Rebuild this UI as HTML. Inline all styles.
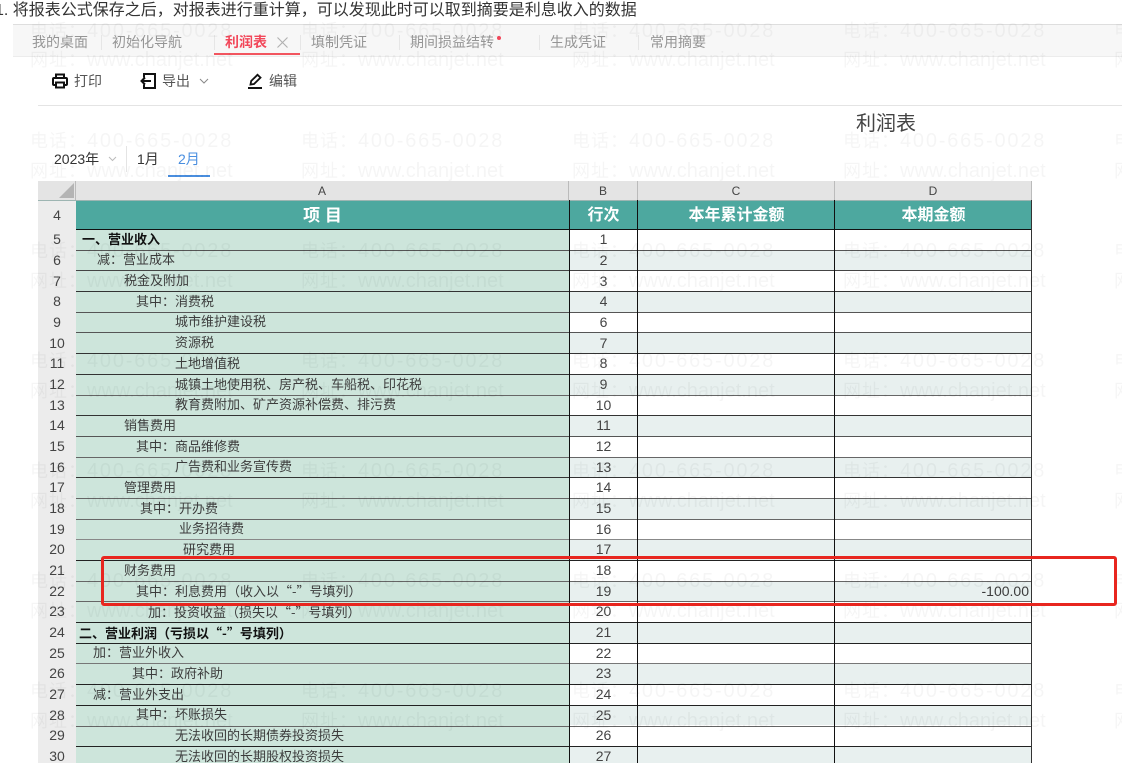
<!DOCTYPE html>
<html lang="zh">
<head>
<meta charset="utf-8">
<style>
html,body{margin:0;padding:0;background:#fff;height:763px;overflow:hidden}
body{width:1122px;height:763px;overflow:hidden;position:relative;font-family:"Liberation Sans","Noto Sans CJK SC",sans-serif;color:#333}
.a{position:absolute;white-space:nowrap}
#c{position:absolute;left:0;top:0;width:1122px;height:763px;overflow:hidden}
#s{position:absolute;left:0;top:0;width:1122px;height:770px;filter:blur(.35px)}
.tab{position:absolute;top:33px;font-size:14px;line-height:18px;color:#959595;white-space:nowrap}
.sep{position:absolute;top:35px;width:1px;height:15px;background:#e6e6e6}
.tb{position:absolute;top:72px;font-size:14px;line-height:18px;color:#555;white-space:nowrap}
.rh{position:absolute;left:38px;width:38px;height:20.67px;line-height:21px;font-size:14px;text-align:center;color:#444;background:#ececec}
.ra{position:absolute;left:76px;width:493px;height:20.67px;background:#cde5db}
.rb{position:absolute;left:569px;width:69px;height:20.67px;background:#fff;text-align:center;line-height:21px;font-size:14px;color:#444}
.rd{position:absolute;left:638px;width:393px;height:20.67px;background:#fff}
.sh{background:#e8f0ef}
.hl{position:absolute;left:76px;width:955px;height:1px;background:#333}
.vl{position:absolute;top:200px;width:1px;height:570px;background:#111}
.t{position:absolute;font-size:13px;line-height:20px;color:#3c3c3c;white-space:nowrap}
.t span{font-family:"Noto Sans CJK SC",sans-serif}
.b{font-weight:bold;color:#111}
.ch{position:absolute;top:181px;height:19px;line-height:20px;font-size:12px;text-align:center;color:#444;background:#e4e4e4;border-right:1px solid #bbb;box-sizing:border-box}
.hd{position:absolute;top:200px;height:29px;line-height:31px;background:#4da89f;color:#fff;font-weight:bold;font-size:16px;text-align:center}
.w{position:absolute;font-size:20px;line-height:24px;color:rgba(0,0,0,.04);white-space:nowrap;letter-spacing:1.8px}
.w b{font-weight:normal;font-size:18px;letter-spacing:1px}
.w2{letter-spacing:0}
</style>
</head>
<body>
<div id="c">
<div id="s">
<div class="a" style="left:-5px;top:1px;font-size:16px;line-height:20px;color:#333">1. 将报表公式保存之后&#xFF0C;对报表进行重计算&#xFF0C;可以发现此时可以取到摘要是利息收入的数据</div>

<div class="a" style="left:13px;top:24px;width:1109px;height:31px;background:#f7f7f7;border-top:1px solid #dedede;border-bottom:1px solid #ececec"></div>
<div class="tab" style="left:32px">我的桌面</div><div class="sep" style="left:101px"></div>
<div class="tab" style="left:112px">初始化导航</div><div class="sep" style="left:214px"></div>
<div class="tab" style="left:225px;color:#f2475a;font-weight:bold">利润表</div>
<svg class="a" style="left:277px;top:37px" width="11" height="11" viewBox="0 0 11 11" fill="none" stroke="#b0b0b0" stroke-width="1.1"><path d="M.5.5l10 10M10.5.5l-10 10"/></svg>
<div class="a" style="left:214px;top:53px;width:86px;height:2px;background:#f2555f"></div>
<div class="sep" style="left:300px"></div>
<div class="tab" style="left:311px">填制凭证</div><div class="sep" style="left:399px"></div>
<div class="tab" style="left:410px">期间损益结转</div>
<div class="a" style="left:497px;top:36px;width:4px;height:4px;border-radius:2px;background:#f2475a"></div>
<div class="sep" style="left:539px"></div>
<div class="tab" style="left:550px">生成凭证</div><div class="sep" style="left:638px"></div>
<div class="tab" style="left:650px">常用摘要</div>

<svg class="a" style="left:52px;top:73px" width="16" height="16" viewBox="0 0 16 16" fill="none" stroke="#111" stroke-width="2"><path d="M4 5V1.5h8V5"/><path d="M4 12H2a1 1 0 0 1-1-1V6a1 1 0 0 1 1-1h12a1 1 0 0 1 1 1v5a1 1 0 0 1-1 1h-2"/><path d="M4 9.5h8v5H4z"/></svg>
<div class="tb" style="left:74px">打印</div>
<svg class="a" style="left:140px;top:73px" width="16" height="16" viewBox="0 0 16 16" fill="none" stroke="#111" stroke-width="2"><path d="M4 4.5V1h11v14H4v-3.5"/><path d="M11 8H1.5M5 4.5L1.5 8 5 11.5"/></svg>
<div class="tb" style="left:162px">导出</div>
<svg class="a" style="left:199px;top:78px" width="10" height="7" viewBox="0 0 10 7" fill="none" stroke="#888" stroke-width="1"><path d="M1 1l4 4 4-4"/></svg>
<svg class="a" style="left:248px;top:73px" width="15" height="16" viewBox="0 0 15 16" fill="none" stroke="#111" stroke-width="1.8"><path d="M2.5 11.5L3.2 8 9.5 1.8l3 2.8L6 11z"/><path d="M0 15h14" stroke-width="2"/></svg>
<div class="tb" style="left:269px">编辑</div>
<div class="a" style="left:38px;top:105px;width:1084px;height:1px;background:#e4e4e4"></div>

<div class="a" style="left:856px;top:112px;font-size:20px;line-height:24px;color:#444">利润表</div>
<div class="a" style="left:54px;top:150px;font-size:14px;line-height:18px;color:#333">2023年</div>
<svg class="a" style="left:108px;top:156px" width="9" height="6" viewBox="0 0 9 6" fill="none" stroke="#bbb" stroke-width="1"><path d="M1 1l3.5 3.5L8 1"/></svg>
<div class="a" style="left:126px;top:146px;width:1px;height:26px;background:#e4e4e4"></div>
<div class="a" style="left:137px;top:150px;font-size:14px;line-height:18px;color:#333">1月</div>
<div class="a" style="left:178px;top:150px;font-size:14px;line-height:18px;color:#4a8fe0">2月</div>
<div class="a" style="left:168px;top:175px;width:42px;height:2px;background:#4a8fe0"></div>

<!-- headers -->
<div class="a" style="left:38px;top:181px;width:38px;height:19px;background:#e4e4e4;border-right:1px solid #bbb;box-sizing:border-box"></div>
<svg class="a" style="left:59px;top:183px" width="15" height="15"><path d="M15 0V15H0z" fill="#b4b4b4"/></svg>
<div class="ch" style="left:76px;width:493px">A</div>
<div class="ch" style="left:569px;width:69px">B</div>
<div class="ch" style="left:638px;width:197px">C</div>
<div class="ch" style="left:835px;width:197px">D</div>
<div class="rh" style="top:200px;height:29.3px;line-height:30px">4</div>
<div class="hd" style="left:76px;width:493px;font-size:17px">项 目</div>
<div class="hd" style="left:569px;width:69px">行次</div>
<div class="hd" style="left:638px;width:197px">本年累计金额</div>
<div class="hd" style="left:835px;width:197px">本期金额</div>
<div class="a" style="left:38px;top:199.5px;width:994px;height:1px;background:#9db5b2"></div>

<!-- row backgrounds -->
<div class="rh" style="top:229.3px">5</div><div class="ra" style="top:229.3px"></div><div class="rd" style="top:229.3px"></div><div class="rb" style="top:229.3px">1</div>
<div class="rh" style="top:250px">6</div><div class="ra" style="top:250px"></div><div class="rd sh" style="top:250px"></div><div class="rb sh" style="top:250px">2</div>
<div class="rh" style="top:270.6px">7</div><div class="ra" style="top:270.6px"></div><div class="rd" style="top:270.6px"></div><div class="rb" style="top:270.6px">3</div>
<div class="rh" style="top:291.3px">8</div><div class="ra" style="top:291.3px"></div><div class="rd sh" style="top:291.3px"></div><div class="rb sh" style="top:291.3px">4</div>
<div class="rh" style="top:312px">9</div><div class="ra" style="top:312px"></div><div class="rd" style="top:312px"></div><div class="rb" style="top:312px">6</div>
<div class="rh" style="top:332.6px">10</div><div class="ra" style="top:332.6px"></div><div class="rd sh" style="top:332.6px"></div><div class="rb sh" style="top:332.6px">7</div>
<div class="rh" style="top:353.3px">11</div><div class="ra" style="top:353.3px"></div><div class="rd" style="top:353.3px"></div><div class="rb" style="top:353.3px">8</div>
<div class="rh" style="top:374px">12</div><div class="ra" style="top:374px"></div><div class="rd sh" style="top:374px"></div><div class="rb sh" style="top:374px">9</div>
<div class="rh" style="top:394.7px">13</div><div class="ra" style="top:394.7px"></div><div class="rd" style="top:394.7px"></div><div class="rb" style="top:394.7px">10</div>
<div class="rh" style="top:415.3px">14</div><div class="ra" style="top:415.3px"></div><div class="rd sh" style="top:415.3px"></div><div class="rb sh" style="top:415.3px">11</div>
<div class="rh" style="top:436px">15</div><div class="ra" style="top:436px"></div><div class="rd" style="top:436px"></div><div class="rb" style="top:436px">12</div>
<div class="rh" style="top:456.7px">16</div><div class="ra" style="top:456.7px"></div><div class="rd sh" style="top:456.7px"></div><div class="rb sh" style="top:456.7px">13</div>
<div class="rh" style="top:477.3px">17</div><div class="ra" style="top:477.3px"></div><div class="rd" style="top:477.3px"></div><div class="rb" style="top:477.3px">14</div>
<div class="rh" style="top:498px">18</div><div class="ra" style="top:498px"></div><div class="rd sh" style="top:498px"></div><div class="rb sh" style="top:498px">15</div>
<div class="rh" style="top:518.7px">19</div><div class="ra" style="top:518.7px"></div><div class="rd" style="top:518.7px"></div><div class="rb" style="top:518.7px">16</div>
<div class="rh" style="top:539.3px">20</div><div class="ra" style="top:539.3px"></div><div class="rd sh" style="top:539.3px"></div><div class="rb sh" style="top:539.3px">17</div>
<div class="rh" style="top:560px">21</div><div class="ra" style="top:560px"></div><div class="rd" style="top:560px"></div><div class="rb" style="top:560px">18</div>
<div class="rh" style="top:580.7px">22</div><div class="ra" style="top:580.7px"></div><div class="rd sh" style="top:580.7px"></div><div class="rb sh" style="top:580.7px">19</div>
<div class="rh" style="top:601.3px">23</div><div class="ra" style="top:601.3px"></div><div class="rd" style="top:601.3px"></div><div class="rb" style="top:601.3px">20</div>
<div class="rh" style="top:622px">24</div><div class="ra" style="top:622px"></div><div class="rd sh" style="top:622px"></div><div class="rb sh" style="top:622px">21</div>
<div class="rh" style="top:642.7px">25</div><div class="ra" style="top:642.7px"></div><div class="rd" style="top:642.7px"></div><div class="rb" style="top:642.7px">22</div>
<div class="rh" style="top:663.3px">26</div><div class="ra" style="top:663.3px"></div><div class="rd sh" style="top:663.3px"></div><div class="rb sh" style="top:663.3px">23</div>
<div class="rh" style="top:684px">27</div><div class="ra" style="top:684px"></div><div class="rd" style="top:684px"></div><div class="rb" style="top:684px">24</div>
<div class="rh" style="top:704.7px">28</div><div class="ra" style="top:704.7px"></div><div class="rd sh" style="top:704.7px"></div><div class="rb sh" style="top:704.7px">25</div>
<div class="rh" style="top:725.3px">29</div><div class="ra" style="top:725.3px"></div><div class="rd" style="top:725.3px"></div><div class="rb" style="top:725.3px">26</div>
<div class="rh" style="top:746px">30</div><div class="ra" style="top:746px"></div><div class="rd sh" style="top:746px"></div><div class="rb sh" style="top:746px">27</div>

<!-- grid lines -->
<div class="hl" style="top:229px;background:#111"></div><div class="hl" style="top:250px;background:#555"></div><div class="hl" style="top:270px;background:#444"></div><div class="hl" style="top:291px;background:#333"></div><div class="hl" style="top:312px;background:#555"></div><div class="hl" style="top:332px;background:#555"></div><div class="hl" style="top:353px;background:#333"></div><div class="hl" style="top:374px;background:#333"></div><div class="hl" style="top:395px;background:#666"></div><div class="hl" style="top:415px;background:#333"></div><div class="hl" style="top:436px;background:#555"></div><div class="hl" style="top:457px;background:#666"></div><div class="hl" style="top:477px;background:#333"></div><div class="hl" style="top:498px;background:#666"></div><div class="hl" style="top:519px;background:#666"></div><div class="hl" style="top:539px;background:#888"></div><div class="hl" style="top:560px;background:#222"></div><div class="hl" style="top:581px;background:#666"></div><div class="hl" style="top:601px;background:#666"></div><div class="hl" style="top:622px;background:#222"></div><div class="hl" style="top:643px;background:#222"></div><div class="hl" style="top:663px;background:#777"></div><div class="hl" style="top:684px;background:#222"></div><div class="hl" style="top:705px;background:#222"></div><div class="hl" style="top:726px;background:#666"></div><div class="hl" style="top:746px;background:#222"></div>
<div class="vl" style="left:569px"></div><div class="vl" style="left:637px"></div><div class="vl" style="left:834px"></div><div class="vl" style="left:1031px;background:#333"></div>

<!-- labels -->
<div class="t b" style="left:82px;top:230px">一、营业收入</div>
<div class="t" style="left:97px;top:250px">减&#xFF1A;营业成本</div>
<div class="t" style="left:124px;top:271px">税金及附加</div>
<div class="t" style="left:136px;top:292px">其中&#xFF1A;消费税</div>
<div class="t" style="left:175px;top:312px">城市维护建设税</div>
<div class="t" style="left:175px;top:333px">资源税</div>
<div class="t" style="left:175px;top:354px">土地增值税</div>
<div class="t" style="left:175px;top:375px">城镇土地使用税、房产税、车船税、印花税</div>
<div class="t" style="left:175px;top:395px">教育费附加、矿产资源补偿费、排污费</div>
<div class="t" style="left:124px;top:416px">销售费用</div>
<div class="t" style="left:136px;top:437px">其中&#xFF1A;商品维修费</div>
<div class="t" style="left:175px;top:457px">广告费和业务宣传费</div>
<div class="t" style="left:124px;top:478px">管理费用</div>
<div class="t" style="left:140px;top:499px">其中&#xFF1A;开办费</div>
<div class="t" style="left:179px;top:519px">业务招待费</div>
<div class="t" style="left:183px;top:540px">研究费用</div>
<div class="t" style="left:124px;top:561px">财务费用</div>
<div class="t" style="left:136px;top:581px">其中&#xFF1A;利息费用&#xFF08;收入以<span>&#x201C;-&#x201D;</span>号填列&#xFF09;</div>
<div class="t" style="left:148px;top:602px">加&#xFF1A;投资收益&#xFF08;损失以<span>&#x201C;-&#x201D;</span>号填列&#xFF09;</div>
<div class="t b" style="left:79px;top:623px">二、营业利润&#xFF08;亏损以<span>&#x201C;-&#x201D;</span>号填列&#xFF09;</div>
<div class="t" style="left:93px;top:643px">加&#xFF1A;营业外收入</div>
<div class="t" style="left:132px;top:664px">其中&#xFF1A;政府补助</div>
<div class="t" style="left:93px;top:685px">减&#xFF1A;营业外支出</div>
<div class="t" style="left:136px;top:705px">其中&#xFF1A;坏账损失</div>
<div class="t" style="left:175px;top:726px">无法收回的长期债券投资损失</div>
<div class="t" style="left:175px;top:747px">无法收回的长期股权投资损失</div>
<div class="t" style="right:93px;top:581px;font-size:14px">-100.00</div>

<!-- watermarks -->
<div class="w" style="left:30px;top:19px"><b>电话&#xFF1A;</b>400-665-0028</div><div class="w" style="left:301px;top:19px"><b>电话&#xFF1A;</b>400-665-0028</div><div class="w" style="left:572px;top:19px"><b>电话&#xFF1A;</b>400-665-0028</div><div class="w" style="left:843px;top:19px"><b>电话&#xFF1A;</b>400-665-0028</div><div class="w" style="left:1114px;top:19px"><b>电话</b></div>
<div class="w w2" style="left:30px;top:48px"><b>网址&#xFF1A;</b>www.chanjet.net</div><div class="w w2" style="left:301px;top:48px"><b>网址&#xFF1A;</b>www.chanjet.net</div><div class="w w2" style="left:572px;top:48px"><b>网址&#xFF1A;</b>www.chanjet.net</div><div class="w w2" style="left:843px;top:48px"><b>网址&#xFF1A;</b>www.chanjet.net</div><div class="w w2" style="left:1114px;top:48px"><b>网址</b></div>
<div class="w" style="left:30px;top:129px"><b>电话&#xFF1A;</b>400-665-0028</div><div class="w" style="left:301px;top:129px"><b>电话&#xFF1A;</b>400-665-0028</div><div class="w" style="left:572px;top:129px"><b>电话&#xFF1A;</b>400-665-0028</div><div class="w" style="left:843px;top:129px"><b>电话&#xFF1A;</b>400-665-0028</div><div class="w" style="left:1114px;top:129px"><b>电话</b></div>
<div class="w w2" style="left:30px;top:159px"><b>网址&#xFF1A;</b>www.chanjet.net</div><div class="w w2" style="left:301px;top:159px"><b>网址&#xFF1A;</b>www.chanjet.net</div><div class="w w2" style="left:572px;top:159px"><b>网址&#xFF1A;</b>www.chanjet.net</div><div class="w w2" style="left:843px;top:159px"><b>网址&#xFF1A;</b>www.chanjet.net</div><div class="w w2" style="left:1114px;top:159px"><b>网址</b></div>
<div class="w" style="left:30px;top:239px"><b>电话&#xFF1A;</b>400-665-0028</div><div class="w" style="left:301px;top:239px"><b>电话&#xFF1A;</b>400-665-0028</div><div class="w" style="left:572px;top:239px"><b>电话&#xFF1A;</b>400-665-0028</div><div class="w" style="left:843px;top:239px"><b>电话&#xFF1A;</b>400-665-0028</div><div class="w" style="left:1114px;top:239px"><b>电话</b></div>
<div class="w w2" style="left:30px;top:269px"><b>网址&#xFF1A;</b>www.chanjet.net</div><div class="w w2" style="left:301px;top:269px"><b>网址&#xFF1A;</b>www.chanjet.net</div><div class="w w2" style="left:572px;top:269px"><b>网址&#xFF1A;</b>www.chanjet.net</div><div class="w w2" style="left:843px;top:269px"><b>网址&#xFF1A;</b>www.chanjet.net</div><div class="w w2" style="left:1114px;top:269px"><b>网址</b></div>
<div class="w" style="left:30px;top:349px"><b>电话&#xFF1A;</b>400-665-0028</div><div class="w" style="left:301px;top:349px"><b>电话&#xFF1A;</b>400-665-0028</div><div class="w" style="left:572px;top:349px"><b>电话&#xFF1A;</b>400-665-0028</div><div class="w" style="left:843px;top:349px"><b>电话&#xFF1A;</b>400-665-0028</div><div class="w" style="left:1114px;top:349px"><b>电话</b></div>
<div class="w w2" style="left:30px;top:379px"><b>网址&#xFF1A;</b>www.chanjet.net</div><div class="w w2" style="left:301px;top:379px"><b>网址&#xFF1A;</b>www.chanjet.net</div><div class="w w2" style="left:572px;top:379px"><b>网址&#xFF1A;</b>www.chanjet.net</div><div class="w w2" style="left:843px;top:379px"><b>网址&#xFF1A;</b>www.chanjet.net</div><div class="w w2" style="left:1114px;top:379px"><b>网址</b></div>
<div class="w" style="left:30px;top:459px"><b>电话&#xFF1A;</b>400-665-0028</div><div class="w" style="left:301px;top:459px"><b>电话&#xFF1A;</b>400-665-0028</div><div class="w" style="left:572px;top:459px"><b>电话&#xFF1A;</b>400-665-0028</div><div class="w" style="left:843px;top:459px"><b>电话&#xFF1A;</b>400-665-0028</div><div class="w" style="left:1114px;top:459px"><b>电话</b></div>
<div class="w w2" style="left:30px;top:489px"><b>网址&#xFF1A;</b>www.chanjet.net</div><div class="w w2" style="left:301px;top:489px"><b>网址&#xFF1A;</b>www.chanjet.net</div><div class="w w2" style="left:572px;top:489px"><b>网址&#xFF1A;</b>www.chanjet.net</div><div class="w w2" style="left:843px;top:489px"><b>网址&#xFF1A;</b>www.chanjet.net</div><div class="w w2" style="left:1114px;top:489px"><b>网址</b></div>
<div class="w" style="left:30px;top:569px"><b>电话&#xFF1A;</b>400-665-0028</div><div class="w" style="left:301px;top:569px"><b>电话&#xFF1A;</b>400-665-0028</div><div class="w" style="left:572px;top:569px"><b>电话&#xFF1A;</b>400-665-0028</div><div class="w" style="left:843px;top:569px"><b>电话&#xFF1A;</b>400-665-0028</div><div class="w" style="left:1114px;top:569px"><b>电话</b></div>
<div class="w w2" style="left:30px;top:599px"><b>网址&#xFF1A;</b>www.chanjet.net</div><div class="w w2" style="left:301px;top:599px"><b>网址&#xFF1A;</b>www.chanjet.net</div><div class="w w2" style="left:572px;top:599px"><b>网址&#xFF1A;</b>www.chanjet.net</div><div class="w w2" style="left:843px;top:599px"><b>网址&#xFF1A;</b>www.chanjet.net</div><div class="w w2" style="left:1114px;top:599px"><b>网址</b></div>
<div class="w" style="left:30px;top:679px"><b>电话&#xFF1A;</b>400-665-0028</div><div class="w" style="left:301px;top:679px"><b>电话&#xFF1A;</b>400-665-0028</div><div class="w" style="left:572px;top:679px"><b>电话&#xFF1A;</b>400-665-0028</div><div class="w" style="left:843px;top:679px"><b>电话&#xFF1A;</b>400-665-0028</div><div class="w" style="left:1114px;top:679px"><b>电话</b></div>
<div class="w w2" style="left:30px;top:709px"><b>网址&#xFF1A;</b>www.chanjet.net</div><div class="w w2" style="left:301px;top:709px"><b>网址&#xFF1A;</b>www.chanjet.net</div><div class="w w2" style="left:572px;top:709px"><b>网址&#xFF1A;</b>www.chanjet.net</div><div class="w w2" style="left:843px;top:709px"><b>网址&#xFF1A;</b>www.chanjet.net</div><div class="w w2" style="left:1114px;top:709px"><b>网址</b></div>

<!-- red box -->
<div class="a" style="left:101px;top:556px;width:1016px;height:50px;border:3px solid #e8261f;border-radius:3px;box-sizing:border-box"></div>
</div>
</div>
</body>
</html>
